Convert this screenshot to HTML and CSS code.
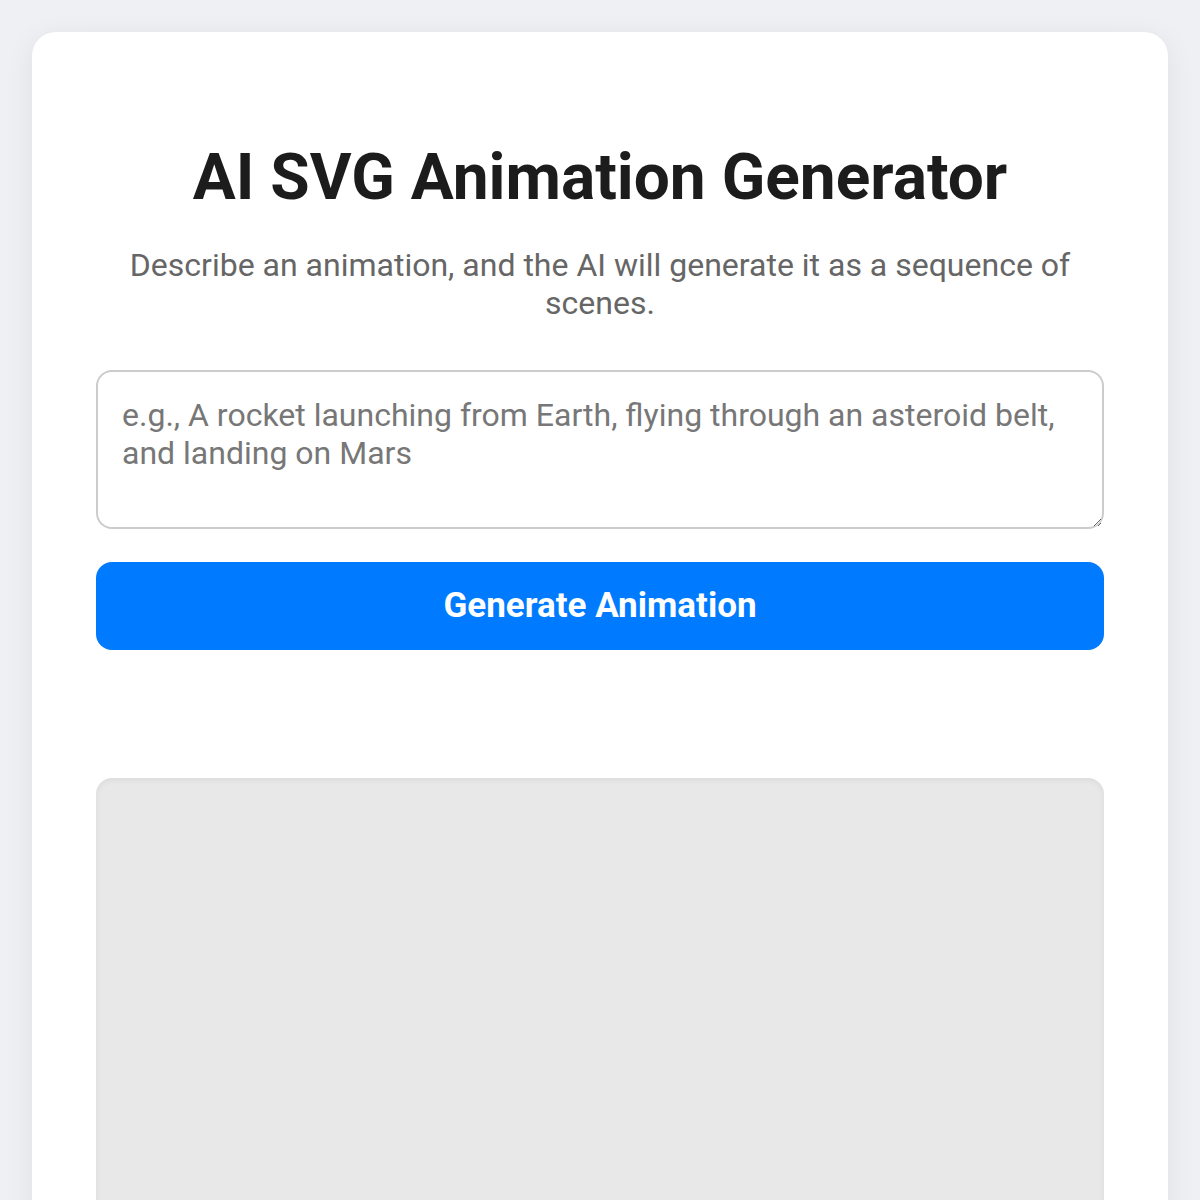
FILE: index.html
```html
<!DOCTYPE html>
<html lang="en">
<head>
<meta charset="utf-8">
<title>AI SVG Animation Generator</title>
<link rel="stylesheet" href="styles.css">
</head>
<body>
<main class="card">
  <h1 class="title">AI SVG Animation Generator</h1>
  <p class="subtitle">Describe an animation, and the AI will generate it as a sequence of scenes.</p>
  <textarea class="prompt" placeholder="e.g., A rocket launching from Earth, flying through an asteroid belt, and landing on Mars"></textarea>
  <button class="generate" type="button">Generate Animation</button>
  <div class="status"></div>
  <div class="stage"></div>
</main>
</body>
</html>
```

FILE: styles.css
```css
html, body {
  margin: 0;
  padding: 0;
}
body {
  background: #eef0f3;
  font-family: Roboto, "Liberation Sans", Arial, sans-serif;
  padding: 32px 32px 0;
}
.card {
  background: #ffffff;
  border-radius: 24px;
  box-shadow: 0 6px 30px rgba(0, 0, 0, 0.07);
  padding: 108px 64px 64px;
  box-sizing: border-box;
  min-height: 1300px;
}
.title {
  margin: 0;
  text-align: center;
  font-size: 64px;
  line-height: 76.8px;
  font-weight: 700;
  color: #1c1c1c;
}
.subtitle {
  margin: 29px 0 0;
  text-align: center;
  font-size: 32px;
  line-height: 38.4px;
  color: #666666;
}
.prompt {
  display: block;
  width: 100%;
  height: 159px;
  box-sizing: border-box;
  margin: 47px 0 0;
  padding: 24px 24px 23px;
  border: 2px solid #cccccc;
  border-radius: 16px;
  font-family: Roboto, "Liberation Sans", Arial, sans-serif;
  font-size: 32px;
  line-height: 38.4px;
  color: #333333;
  resize: vertical;
  outline: none;
}
.prompt::placeholder {
  color: #777777;
}
.generate {
  display: block;
  width: 100%;
  height: 88px;
  margin: 33px 0 0;
  border: none;
  border-radius: 16px;
  background: #007bff;
  color: #ffffff;
  font-family: Roboto, "Liberation Sans", Arial, sans-serif;
  font-size: 35px;
  font-weight: 700;
  cursor: pointer;
}
.status {
  height: 128px;
}
.stage {
  height: 600px;
  background: #e8e8e8;
  border-radius: 16px;
  box-shadow: inset 0 2px 6px rgba(0, 0, 0, 0.06);
}
```
